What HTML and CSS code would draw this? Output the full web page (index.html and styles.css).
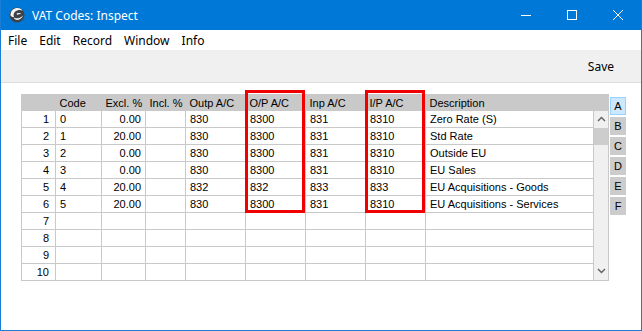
FILE: index.html
```html
<!DOCTYPE html>
<html lang="en">

<head>
    <meta charset="UTF-8">
    <title>VAT Codes: Inspect</title>
    <link rel="stylesheet" href="styles.css">
</head>

<body>
    <div class="window">
        <div class="titlebar">
            <svg class="app-icon" width="16" height="16" viewBox="0 0 16 16">
                <circle cx="8" cy="8" r="7.5" fill="#3d4349"/>
                <path d="M1.5 8 C1.5 3.5 5 1 8.5 1 C11 1 12.5 2 13.5 3.5 C11.5 2.5 8 2.8 6 4.8 C4.5 6.3 4.2 8.5 5 10 C3 10 1.5 9.5 1.5 8 Z" fill="#f2f4f6"/>
                <path d="M4.5 10.5 C7 12 11 11.5 14 8.5 C13.2 11 11 12.8 8.5 12.9 C6.8 13 5.3 12 4.5 10.5 Z" fill="#f2f4f6"/>
                <path d="M7.5 6.5 C9 5.5 11.5 5.8 12.5 7.2 C11 6.9 9.5 7.1 8.3 8 Z" fill="#f2f4f6"/>
            </svg>
            <span class="title">VAT Codes: Inspect</span>
            <div class="controls">
                <span class="ctl"><svg width="10" height="10" viewBox="0 0 10 10"><line x1="0" y1="5.5" x2="10" y2="5.5" stroke="#fff" stroke-width="1"/></svg></span>
                <span class="ctl"><svg width="10" height="10" viewBox="0 0 10 10"><rect x="0.5" y="0.5" width="9" height="9" fill="none" stroke="#fff" stroke-width="1"/></svg></span>
                <span class="ctl"><svg width="10" height="10" viewBox="0 0 10 10"><path d="M0 0 L10 10 M10 0 L0 10" stroke="#fff" stroke-width="1"/></svg></span>
            </div>
        </div>

        <div class="menubar">
            <span>File</span>
            <span>Edit</span>
            <span>Record</span>
            <span>Window</span>
            <span>Info</span>
        </div>

        <div class="toolbar">
            <span class="save">Save</span>
        </div>

        <div class="content">
            <div class="matrix">
                <div class="grid">
                    <table class="vat">
                        <colgroup>
                            <col class="c-num">
                            <col class="c-code">
                            <col class="c-excl">
                            <col class="c-incl">
                            <col class="c-acc">
                            <col class="c-acc">
                            <col class="c-acc">
                            <col class="c-acc">
                            <col class="c-desc">
                            <col class="c-scroll">
                        </colgroup>
                        <thead>
                            <tr>
                                <th></th>
                                <th>Code</th>
                                <th>Excl. %</th>
                                <th>Incl. %</th>
                                <th>Outp A/C</th>
                                <th>O/P A/C</th>
                                <th>Inp A/C</th>
                                <th>I/P A/C</th>
                                <th>Description</th>
                                <th></th>
                            </tr>
                        </thead>
                        <tbody id="rows"></tbody>
                    </table>
                    <div class="mark mark-op"></div>
                    <div class="mark mark-ip"></div>
                </div>
                <div class="tabs">
                    <span class="tab active">A</span>
                    <span class="tab">B</span>
                    <span class="tab">C</span>
                    <span class="tab">D</span>
                    <span class="tab">E</span>
                    <span class="tab">F</span>
                </div>
            </div>
        </div>
    </div>

    <script>
        // VAT code rows
        const codes = [
            ['0', '0.00', '', '830', '8300', '831', '8310', 'Zero Rate (S)'],
            ['1', '20.00', '', '830', '8300', '831', '8310', 'Std Rate'],
            ['2', '0.00', '', '830', '8300', '831', '8310', 'Outside EU'],
            ['3', '0.00', '', '830', '8300', '831', '8310', 'EU Sales'],
            ['4', '20.00', '', '832', '832', '833', '833', 'EU Acquisitions - Goods'],
            ['5', '20.00', '', '830', '8300', '831', '8310', 'EU Acquisitions - Services']
        ];

        const tbody = document.getElementById('rows');
        for (let i = 0; i < 10; i++) {
            const row = codes[i] || ['', '', '', '', '', '', '', ''];
            const tr = document.createElement('tr');
            let html = `<td class="num">${i + 1}</td>`;
            row.forEach((val, idx) => {
                const cls = (idx === 1 || idx === 2) ? ' class="right"' : '';
                html += `<td${cls}>${val}</td>`;
            });
            if (i === 0) {
                html += `<td class="scroll" rowspan="10">
                    <div class="sb">
                        <svg class="arrow" width="9" height="6" viewBox="0 0 9 6"><path d="M1 5 L4.5 1.5 L8 5" fill="none" stroke="#606060" stroke-width="1.4"/></svg>
                        <div class="thumb"></div>
                        <div class="track"></div>
                        <svg class="arrow" width="9" height="6" viewBox="0 0 9 6"><path d="M1 1 L4.5 4.5 L8 1" fill="none" stroke="#606060" stroke-width="1.4"/></svg>
                    </div>
                </td>`;
            }
            tr.innerHTML = html;
            tbody.appendChild(tr);
        }
    </script>
</body>

</html>
```

FILE: styles.css
```css
* {
    box-sizing: border-box;
}

body {
    margin: 0;
    font-family: 'Liberation Sans', Arial, sans-serif;
    background: #fff;
}

.window {
    width: 642px;
    height: 331px;
    border: 1px solid #1a7fd4;
    border-top: none;
    background: #fff;
    overflow: hidden;
}

.titlebar {
    height: 30px;
    background: #0078d7;
    color: #fff;
    display: flex;
    align-items: center;
    padding-left: 8px;
    font-family: 'Noto Sans', sans-serif;
    font-size: 12px;
}

.app-icon {
    margin-right: 7px;
}

.controls {
    margin-left: auto;
    display: flex;
}

.ctl {
    width: 46px;
    height: 30px;
    display: flex;
    align-items: center;
    justify-content: center;
}

.menubar {
    height: 20px;
    display: flex;
    align-items: center;
    padding-left: 7px;
    gap: 12px;
    font-family: 'Noto Sans', sans-serif;
    font-size: 12px;
    color: #000;
}

.toolbar {
    height: 33px;
    background: #f0f0f0;
    border-bottom: 1px solid #dcdcdc;
    display: flex;
    align-items: center;
    justify-content: flex-end;
    padding-right: 27px;
    font-family: 'Noto Sans', sans-serif;
    font-size: 12px;
}

.content {
    padding: 11px 0 0 20px;
}

.matrix {
    display: flex;
    align-items: flex-start;
}

.grid {
    position: relative;
}

.vat {
    border-collapse: collapse;
    table-layout: fixed;
    width: 587px;
    font-size: 11px;
    color: #000;
}

.c-num { width: 34px; }
.c-code { width: 46px; }
.c-excl { width: 44px; }
.c-incl { width: 40px; }
.c-acc { width: 60px; }
.c-desc { width: 168px; }
.c-scroll { width: 15px; }

.vat th {
    background: #c9c9c9;
    height: 16px;
    padding: 0 4px;
    font-weight: normal;
    text-align: left;
    white-space: nowrap;
    overflow: hidden;
    border: none;
}

.vat thead tr {
    border: 1px solid #c9c9c9;
}

.vat td {
    height: 17px;
    padding: 0 4px;
    border: 1px solid #c9c9c9;
    white-space: nowrap;
    overflow: hidden;
}

.vat td.num,
.vat td.right {
    text-align: right;
}

.vat td.num {
    padding-right: 6px;
}

.vat td.scroll {
    padding: 0;
    background: #f0f0f0;
    vertical-align: top;
}

.sb {
    height: 169px;
    display: flex;
    flex-direction: column;
    align-items: center;
}

.sb .arrow {
    margin: 5px 0 6px;
}

.thumb {
    width: 15px;
    height: 17px;
    background: #cdcdcd;
}

.track {
    flex: 1;
}

.mark {
    position: absolute;
    top: -4px;
    width: 60px;
    height: 123px;
    border: 3px solid #f00000;
}

.mark-op {
    left: 224px;
}

.mark-ip {
    left: 344px;
}

.tabs {
    display: flex;
    flex-direction: column;
    gap: 2px;
    margin-top: 3px;
    margin-left: 1px;
}

.tab {
    width: 16px;
    height: 18px;
    background: #cccccc;
    font-size: 11px;
    display: flex;
    align-items: center;
    justify-content: center;
}

.tab.active {
    background: #cce8ff;
    border: 1px solid #99d1ff;
}
```
